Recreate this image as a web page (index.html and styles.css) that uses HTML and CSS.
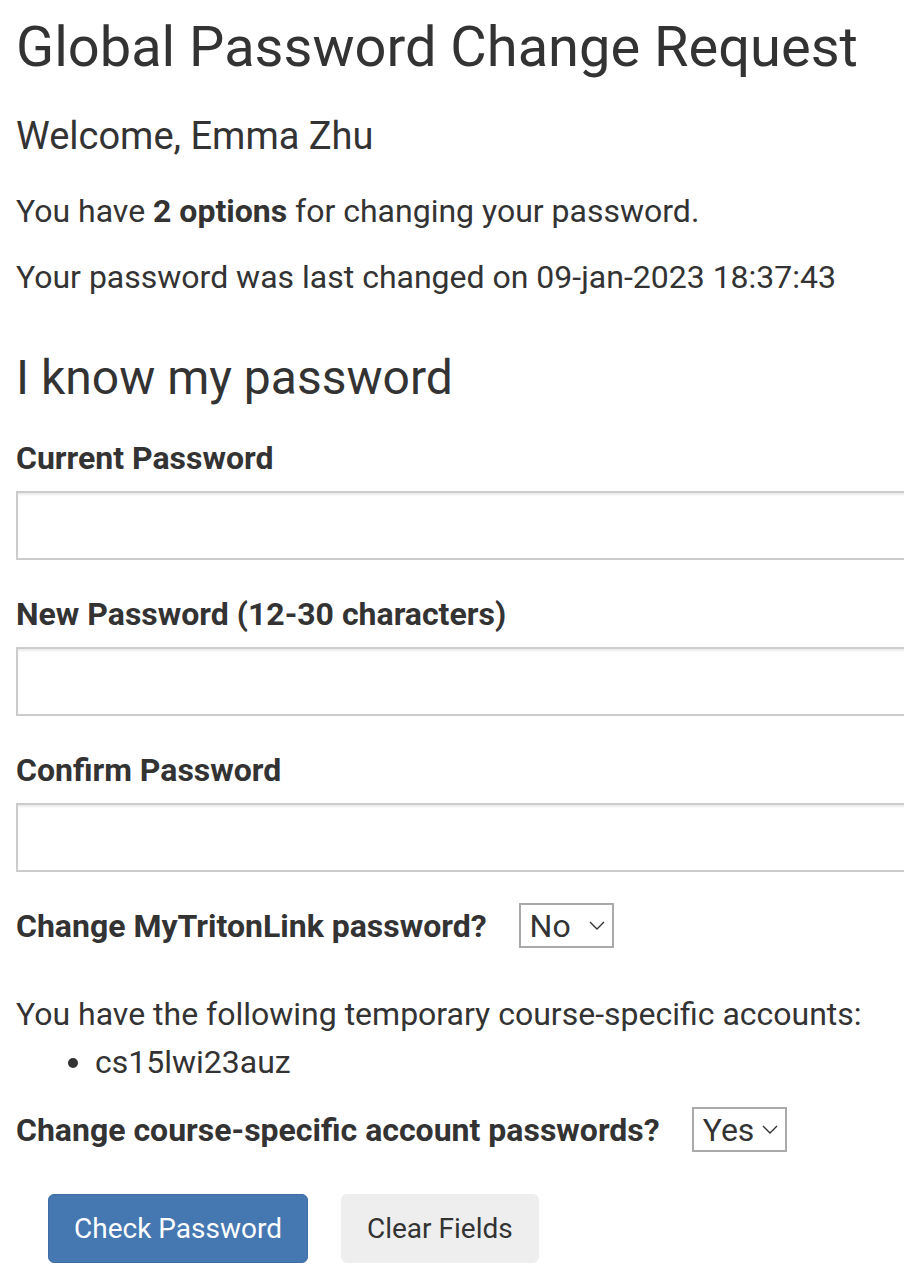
FILE: index.html
```html
<!DOCTYPE html>
<html lang="en">
<head>
<meta charset="utf-8">
<title>Global Password Change Request</title>
<link rel="stylesheet" href="styles.css">
</head>
<body>
<main class="page">
  <h1 class="title">Global Password Change Request</h1>
  <p class="welcome">Welcome, Emma Zhu</p>
  <p class="text first">You have <strong>2 options</strong> for changing your password.</p>
  <p class="text">Your password was last changed on 09-jan-2023 18:37:43</p>

  <h2 class="subtitle">I know my password</h2>

  <form class="form">
    <div class="field">
      <label class="label" for="cur">Current Password</label>
      <input class="input" id="cur" type="password">
    </div>
    <div class="field">
      <label class="label" for="new">New Password (12-30 characters)</label>
      <input class="input" id="new" type="password">
    </div>
    <div class="field last">
      <label class="label" for="conf">Confirm Password</label>
      <input class="input" id="conf" type="password">
    </div>

    <div class="row">
      <span class="label">Change MyTritonLink password?</span>
      <div class="select">
        <span>No</span>
        <svg class="chev" width="16" height="9" viewBox="0 0 16 9"><path d="M1 1 L8 8 L15 1" fill="none" stroke="#333" stroke-width="1.4"/></svg>
      </div>
    </div>

    <p class="accounts">You have the following temporary course-specific accounts:</p>
    <ul class="acct-list">
      <li>cs15lwi23auz</li>
    </ul>

    <div class="row row2">
      <span class="label">Change course-specific account passwords?</span>
      <div class="select">
        <span>Yes</span>
        <svg class="chev" width="16" height="9" viewBox="0 0 16 9"><path d="M1 1 L8 8 L15 1" fill="none" stroke="#333" stroke-width="1.4"/></svg>
      </div>
    </div>

    <div class="buttons">
      <button type="button" class="btn btn-primary">Check Password</button>
      <button type="button" class="btn btn-default">Clear Fields</button>
    </div>
  </form>
</main>
</body>
</html>
```

FILE: styles.css
```css
html {
  overflow: hidden;
  background: #fff;
}
body {
  margin: 0;
  font-family: Roboto, "Liberation Sans", sans-serif;
  color: #333;
}
.page {
  padding: 0 16px;
}
.title {
  font-size: 56px;
  font-weight: 400;
  line-height: 72px;
  margin: 11px 0 0;
  white-space: nowrap;
}
.welcome {
  font-size: 38px;
  line-height: 44px;
  margin: 31px 0 0;
}
.text {
  font-size: 32px;
  line-height: 44px;
  margin: 22px 0 0;
}
.text.first {
  margin-top: 31px;
}
.text strong {
  font-weight: 700;
}
.subtitle {
  font-size: 48px;
  font-weight: 400;
  line-height: 56px;
  margin: 51px 0 0;
}
.form {
  margin-top: 30px;
}
.field {
  display: flex;
  flex-direction: column;
  align-items: flex-start;
  margin-bottom: 32px;
}
.field.last {
  margin-bottom: 31px;
}
.label {
  font-size: 32px;
  font-weight: 700;
  line-height: 44px;
  margin-bottom: 11px;
}
.input {
  box-sizing: border-box;
  width: 1000px;
  height: 69px;
  margin: 0;
  border: 2px solid #ccc;
  border-radius: 0;
  box-shadow: inset 0 2px 2px rgba(0, 0, 0, 0.075);
  background: #fff;
  font-size: 32px;
}
.row {
  display: flex;
  align-items: center;
  gap: 32px;
  margin-top: 0;
}
.row .label {
  margin-bottom: 0;
}
.row2 {
  margin-top: 21px;
}
.select {
  box-sizing: border-box;
  width: 95px;
  height: 45px;
  border: 2px solid #aaa;
  display: flex;
  align-items: center;
  justify-content: space-between;
  padding: 0 7px 0 9px;
  font-size: 32px;
  line-height: 40px;
  color: #333;
}
.chev {
  display: block;
}
.accounts {
  font-size: 32px;
  line-height: 48px;
  margin: 42px 0 0;
}
.acct-list {
  font-size: 32px;
  line-height: 48px;
  margin: 0;
  padding-left: 79px;
}
.buttons {
  display: flex;
  gap: 33px;
  margin: 42px 0 0 32px;
}
.btn {
  box-sizing: border-box;
  height: 69px;
  padding: 0 25px;
  font-family: Roboto, "Liberation Sans", sans-serif;
  font-size: 28px;
  border-radius: 6px;
  border: 1px solid transparent;
  cursor: pointer;
}
.btn-primary {
  background: #4577b1;
  border-color: #3e6ca3;
  color: #fff;
}
.btn-default {
  background: #eee;
  border-color: #eee;
  color: #333;
}
```
